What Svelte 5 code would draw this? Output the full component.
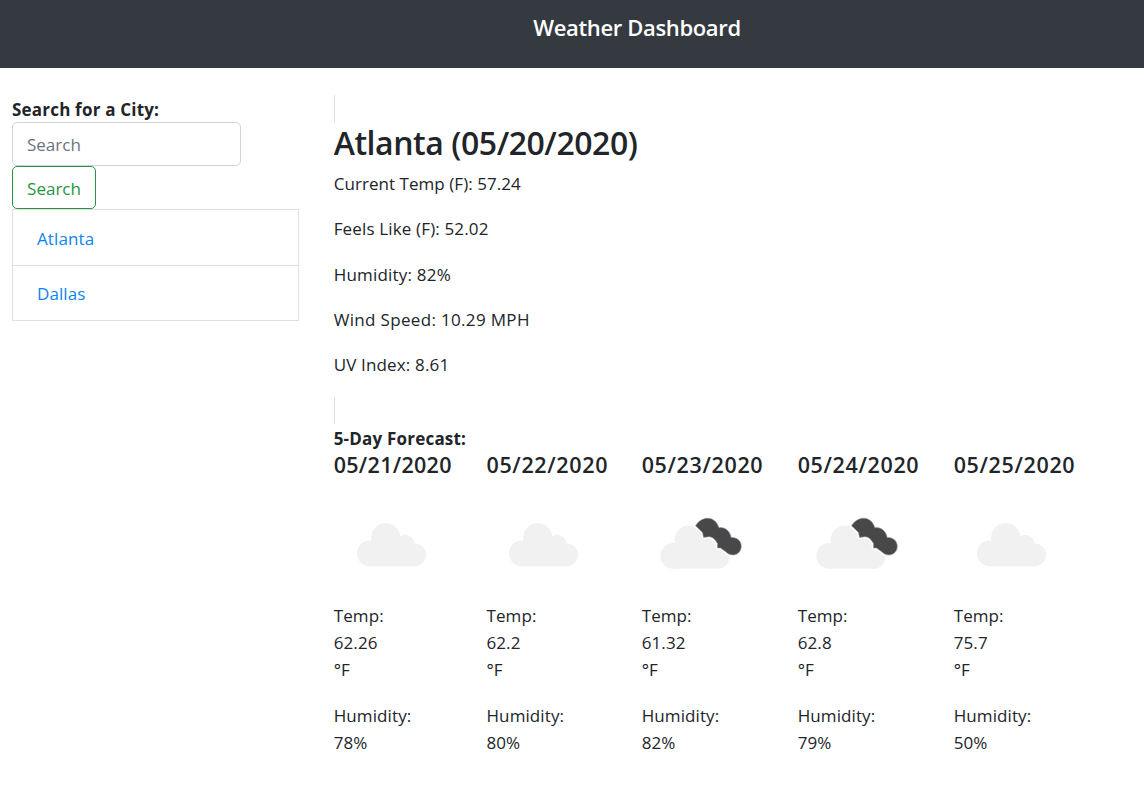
<script>
  const cities = ['Atlanta', 'Dallas'];
  const current = [
    { text: 'Current Temp (F): 57.24', tracking: 0.05 },
    { text: 'Feels Like (F): 52.02', tracking: 0.15 },
    { text: 'Humidity: 82%', tracking: 0.2 },
    { text: 'Wind Speed: 10.29 MPH', tracking: 0.33 },
    { text: 'UV Index: 8.61', tracking: 0.15 }
  ];
  const days = [
    { date: '05/21/2020', temp: '62.26', humidity: '78%', broken: false },
    { date: '05/22/2020', temp: '62.2', humidity: '80%', broken: false },
    { date: '05/23/2020', temp: '61.32', humidity: '82%', broken: true },
    { date: '05/24/2020', temp: '62.8', humidity: '79%', broken: true },
    { date: '05/25/2020', temp: '75.7', humidity: '50%', broken: false }
  ];
</script>

{#snippet cloud()}
  <circle cx="35.8" cy="66.4" r="12.8" />
  <circle cx="51.7" cy="50.5" r="14.5" />
  <circle cx="71" cy="57.3" r="9.5" />
  <circle cx="80.6" cy="67.8" r="11.4" />
  <path d="M35 60L50 48L71 55L81 66V79.2H35Z" />
{/snippet}

<header><h1>Weather Dashboard</h1></header>
<main>
  <aside>
    <div class="label">Search for a City:</div>
    <input type="search" placeholder="Search" aria-label="Search" />
    <button>Search</button>
    <ul>
      {#each cities as city}
        <li>{city}</li>
      {/each}
    </ul>
  </aside>
  <section>
    <div class="rule"></div>
    <h2>Atlanta (05/20/2020)</h2>
    {#each current as line}
      <p style="letter-spacing: {line.tracking}px">{line.text}</p>
    {/each}
    <div class="rule"></div>
    <div class="label forecast">5-Day Forecast:</div>
    <div class="days">
      {#each days as day}
        <article>
          <h5>{day.date}</h5>
          <svg width="114" height="114" viewBox="0 0 114 114" aria-hidden="true">
            {#if day.broken}
              <g fill="#f1f1f1" transform="translate(-4.6 2.5)">{@render cloud()}</g>
              <path
                d="M53.5 38.8C57 33 62 31 66 31.2C71.5 31.5 75 35 77 40.8C82 39.5 88 43.5 89.2 50.5C95 50 99.3 54 99.3 59.3C99.3 64.5 95.5 68 91 68C88 68 86 67 84 65L78.5 61H75.5V56.5C73 52 70.5 50 67 49.7L61.5 50.5L60.5 45.5Z"
                fill="#484848" stroke="#fff" stroke-width="3.6" stroke-linejoin="round"
              />
              <path
                d="M53.5 38.8C57 33 62 31 66 31.2C71.5 31.5 75 35 77 40.8C82 39.5 88 43.5 89.2 50.5C95 50 99.3 54 99.3 59.3C99.3 64.5 95.5 68 91 68C88 68 86 67 84 65L78.5 61H75.5V56.5C73 52 70.5 50 67 49.7L61.5 50.5L60.5 45.5Z"
                fill="#484848" stroke="#8d9ab5" stroke-width=".6"
              />
            {:else}
              <g fill="#f1f1f1">{@render cloud()}</g>
            {/if}
          </svg>
          <p>Temp:<br />{day.temp}<br />°F</p>
          <p>Humidity:<br />{day.humidity}</p>
        </article>
      {/each}
    </div>
  </section>
</main>

<style>
  :global(body) {
    margin: 0;
    background: #fff;
    color: #212529;
    font: 400 17px/27px 'Open Sans', 'Noto Sans', sans-serif;
    overflow: hidden;
  }
  * { box-sizing: border-box; }
  header {
    height: 68px;
    background: #343a40;
    color: #fff;
    padding: 14px 0 0 130px;
    text-align: center;
  }
  h1, h2, h5, p, ul { margin: 0; padding: 0; }
  h1 { font-size: 22px; line-height: 27px; font-weight: 600; letter-spacing: -0.35px; }
  main { display: flex; padding: 27px 0 0 12px; }
  aside { width: 321.7px; display: flex; flex-direction: column; align-items: flex-start; }
  .label { font-weight: 700; height: 27px; line-height: 29px; white-space: nowrap; letter-spacing: 0.2px; }
  input, button {
    font: inherit;
    border-radius: 5px;
    background: #fff;
    padding: 0 14px;
    appearance: none;
    outline: none;
  }
  input { width: 229px; height: 44px; border: 1px solid #ced4da; }
  input::placeholder { color: #6c757d; opacity: 1; }
  button { width: 84px; height: 43px; border: 1px solid #289343; color: #289343; padding: 1px 0 0; }
  ul { width: 287px; list-style: none; border: 1px solid #dfdfdf; }
  li { height: 55px; padding: 15px 24px 0; color: #0d85ee; letter-spacing: 0.1px; }
  li + li { padding-top: 14px; border-top: 1px solid #dfdfdf; }
  section { flex: 1; }
  .rule { width: 1px; height: 27px; background: #dfdfdf; }
  h2 { font-size: 32px; line-height: 40px; font-weight: 600; letter-spacing: -0.45px; padding-top: 0.5px; margin-bottom: 7.4px; white-space: nowrap; }
  p { margin-bottom: 18.35px; }
  .forecast { line-height: 29px; }
  .days { display: grid; grid-template-columns: 152.8px 155.2px 156px 156px 156px; }
  h5 { font-size: 21.5px; line-height: 27px; font-weight: 600; letter-spacing: 0.65px; margin-bottom: 9px; }
  article:first-child h5 { letter-spacing: 0.3px; }
  svg { display: block; margin-bottom: 1.2px; }
  article p { letter-spacing: 0.1px; margin-bottom: 19px; }
</style>
